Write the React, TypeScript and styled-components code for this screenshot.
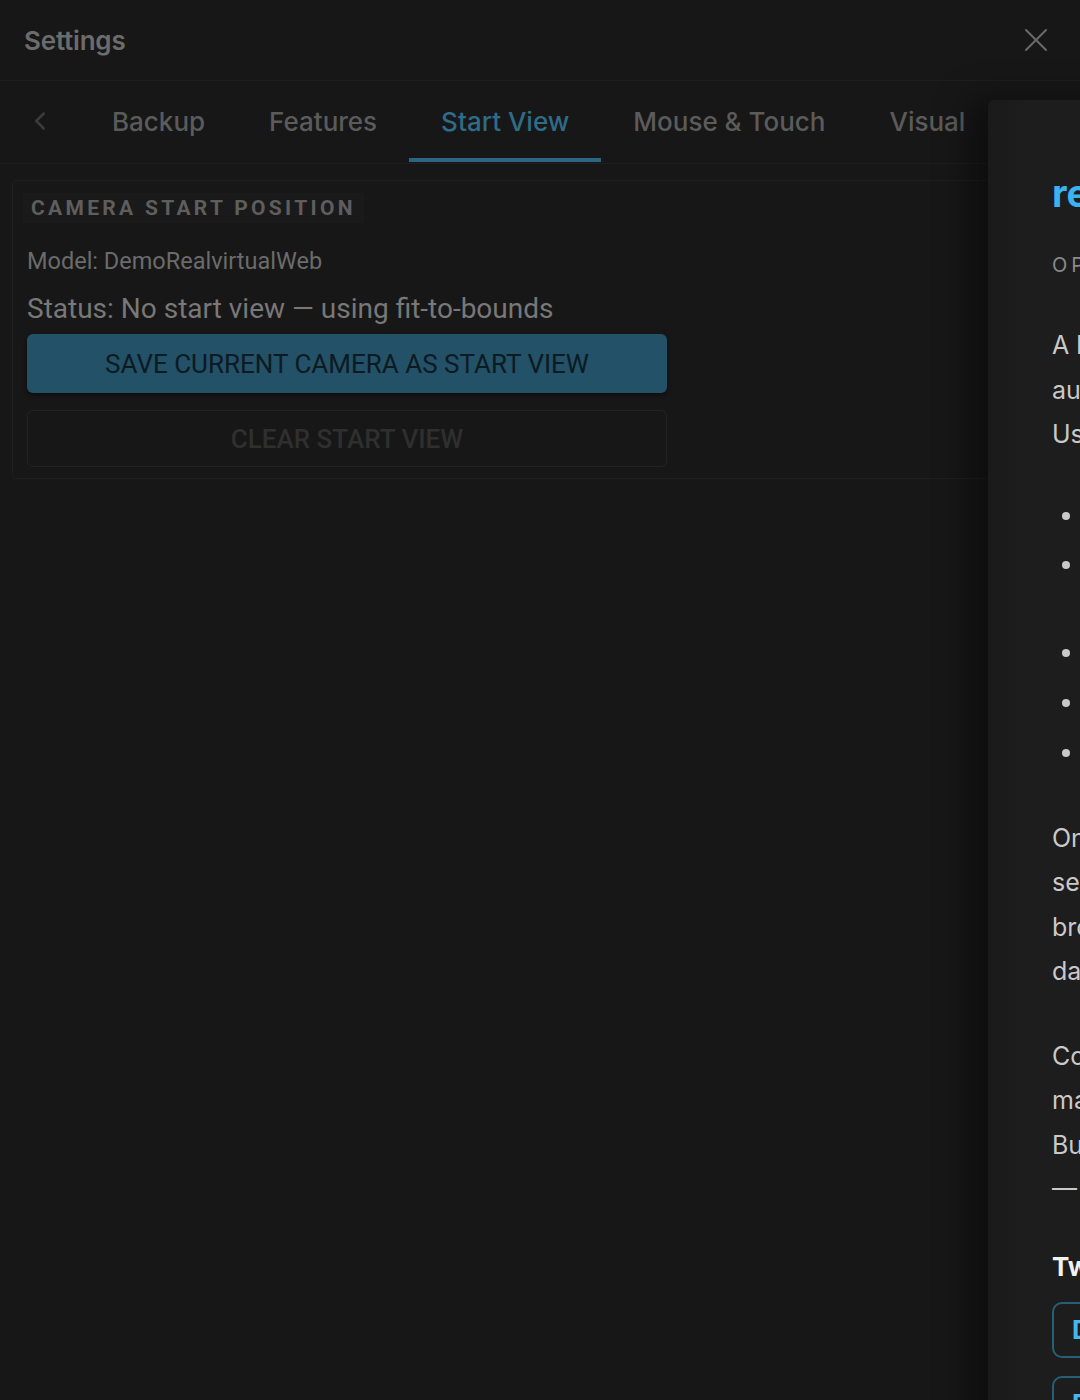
import React, { useState } from 'react';
import styled, { createGlobalStyle } from 'styled-components';
import { X, ChevronLeft } from 'lucide-react';

const GlobalStyle = createGlobalStyle`
  html, body {
    margin: 0;
    padding: 0;
    background: #171717;
  }
  * {
    box-sizing: border-box;
  }
`;

const Page = styled.div`
  position: relative;
  width: 1080px;
  height: 1400px;
  overflow: hidden;
  background: #171717;
  font-family: Inter, 'Noto Sans', sans-serif;
`;

const Header = styled.header`
  height: 81px;
  padding: 0 24px;
  display: flex;
  align-items: center;
  justify-content: space-between;
  border-bottom: 1px solid #1e1e1e;
`;

const Title = styled.h1`
  margin: 0;
  font-size: 26px;
  font-weight: 600;
  color: #6c6c6c;
  letter-spacing: -0.2px;
`;

const IconButton = styled.button`
  background: none;
  border: none;
  padding: 0;
  display: flex;
  align-items: center;
  justify-content: center;
  color: ${({ color }) => color || '#6a6a6a'};
  cursor: pointer;
`;

const TabBar = styled.nav`
  height: 83px;
  display: flex;
  align-items: stretch;
  overflow: hidden;
  border-bottom: 1px solid #1e1e1e;
`;

const BackSlot = styled.div`
  flex: 0 0 80px;
  display: flex;
  align-items: center;
  justify-content: center;
  padding-bottom: 2px;
`;

const Tab = styled.button<{ $active?: boolean }>`
  position: relative;
  flex: 0 0 auto;
  background: none;
  border: none;
  padding: 0 32px 1px;
  font-family: Inter, 'Noto Sans', sans-serif;
  font-size: 26px;
  font-weight: 500;
  white-space: nowrap;
  color: ${({ $active }) => ($active ? '#2e6c88' : '#5b5b5b')};
  cursor: pointer;

  &::after {
    content: '';
    position: absolute;
    left: 0;
    right: 0;
    bottom: 1px;
    height: 4px;
    background: ${({ $active }) => ($active ? '#2b6580' : 'transparent')};
  }
`;

const Content = styled.main`
  padding: 16px 12px;
`;

const Card = styled.section`
  border: 1px solid #1f1f1f;
  border-radius: 4px;
  padding: 12px 14px 11px;
  display: flex;
  flex-direction: column;
`;

const CardHeading = styled.h2`
  align-self: flex-start;
  margin: 0 0 0 -4px;
  padding: 0 8px;
  background: #1a1a1a;
  font-family: Roboto, 'Liberation Sans', sans-serif;
  font-size: 21px;
  line-height: 30px;
  font-weight: 700;
  letter-spacing: 3.3px;
  color: #5e5e5e;
`;

const Meta = styled.p<{ $size: number; $top: number }>`
  margin: ${({ $top }) => $top}px 0 0;
  font-family: Roboto, 'Liberation Sans', sans-serif;
  font-size: ${({ $size }) => $size}px;
  line-height: ${({ $size }) => Math.round($size * 1.25)}px;
  color: ${({ $size }) => ($size > 25 ? '#787878' : '#6b6b6b')};
`;

const ActionButton = styled.button<{ $primary?: boolean; $top: number }>`
  width: 640px;
  height: ${({ $primary }) => ($primary ? 59 : 57)}px;
  margin-top: ${({ $top }) => $top}px;
  border-radius: 6px;
  font-family: Roboto, 'Liberation Sans', sans-serif;
  font-size: 26px;
  font-weight: ${({ $primary }) => ($primary ? 400 : 500)};
  text-transform: uppercase;
  background: ${({ $primary }) => ($primary ? '#235167' : 'transparent')};
  color: ${({ $primary }) => ($primary ? '#0c1a22' : '#2f2f2f')};
  border: ${({ $primary }) => ($primary ? 'none' : '1px solid #222')};
  box-shadow: ${({ $primary }) => ($primary ? '0 2px 4px rgba(0,0,0,0.45)' : 'none')};
  cursor: ${({ $primary }) => ($primary ? 'pointer' : 'default')};
`;

/* side drawer laid over the dialog */
const Drawer = styled.aside`
  position: absolute;
  left: 988px;
  top: 100px;
  width: 720px;
  height: 1400px;
  background: linear-gradient(90deg, #1a1a1a 0px, #1d1d1d 40px, #1e1e1e 100%);
  border-top-left-radius: 6px;
  box-shadow: -18px 0 36px rgba(0, 0, 0, 0.45);
  padding: 71px 0 0 64px;
  font-family: Inter, 'Noto Sans', sans-serif;
  color: #c9c9c9;
  white-space: nowrap;
`;

const DrawerTitle = styled.h2`
  margin: 0;
  font-size: 38px;
  line-height: 44px;
  font-weight: 700;
  color: #3cb3f0;
`;

const Kicker = styled.div`
  margin-top: 36px;
  font-size: 20px;
  line-height: 28px;
  letter-spacing: 4px;
  color: #8a8a8a;
`;

const Para = styled.div<{ $top: number }>`
  margin-top: ${({ $top }) => $top}px;
  font-size: 25px;
  line-height: 44.5px;
`;

const Line = styled.div``;

const List = styled.ul`
  margin: 36px 0 0;
  padding-left: 33px;
  font-size: 25px;
  list-style: disc;

  li::marker {
    color: #c9c9c9;
  }
`;

const Item = styled.li<{ $tight?: boolean }>`
  line-height: ${({ $tight }) => ($tight ? 42.5 : 45)}px;
  margin-bottom: ${({ $tight }) => ($tight ? 2 : 5)}px;
`;

const SubHeading = styled.h3`
  margin: 38px 0 0;
  font-size: 26px;
  line-height: 34px;
  font-weight: 700;
  color: #f2f2f2;
`;

const OutlineButton = styled.button`
  display: block;
  width: 420px;
  height: 56px;
  border: 2px solid #285f75;
  border-radius: 10px;
  background: transparent;
  text-align: left;
  padding: 0 18px;
  font-family: Inter, 'Noto Sans', sans-serif;
  font-size: 26px;
  font-weight: 700;
  color: #45b6f0;
`;

const ButtonStack = styled.div`
  margin-top: 18px;
  display: flex;
  flex-direction: column;
  gap: 18px;
`;

const tabs = ['Backup', 'Features', 'Start View', 'Mouse & Touch', 'Visual'];

export default function App() {
  const [active, setActive] = useState('Start View');

  return (
    <Page>
      <GlobalStyle />
      <Header>
        <Title>Settings</Title>
        <IconButton aria-label="Close">
          <X size={40} strokeWidth={1.2} />
        </IconButton>
      </Header>

      <TabBar>
        <BackSlot>
          <IconButton color="#3b3b3b" aria-label="Previous">
            <ChevronLeft size={30} strokeWidth={2} />
          </IconButton>
        </BackSlot>
        {tabs.map((t) => (
          <Tab key={t} $active={t === active} onClick={() => setActive(t)}>
            {t}
          </Tab>
        ))}
      </TabBar>

      <Content>
        <Card>
          <CardHeading>CAMERA START POSITION</CardHeading>
          <Meta $size={23.5} $top={24}>Model: DemoRealvirtualWeb</Meta>
          <Meta $size={28} $top={15}>Status: No start view — using fit-to-bounds</Meta>
          <ActionButton $primary $top={8}>Save current camera as start view</ActionButton>
          <ActionButton disabled $top={17}>Clear start view</ActionButton>
        </Card>
      </Content>

      <Drawer>
        <DrawerTitle>realvirtual WEB</DrawerTitle>
        <Kicker>OPEN PREVIEW</Kicker>
        <Para $top={44}>
          <Line>A lightweight viewer for digital twins of</Line>
          <Line>automation systems, running in any browser.</Line>
          <Line>Use it to explore models exported from Unity.</Line>
        </Para>
        <List>
          <Item>Orbit, pan and zoom the 3D scene</Item>
          <Item $tight>
            Live signals and drive states
            <br />
            from the simulation
          </Item>
          <Item>Hierarchy and inspector panels</Item>
          <Item>Start views and camera presets</Item>
          <Item>Works on desktop and touch devices</Item>
        </List>
        <Para $top={41}>
          <Line>Once loaded, the model stays cached on this</Line>
          <Line>session, so revisiting it is fast and your</Line>
          <Line>browser keeps the settings you made, with no</Line>
          <Line>data sent to any server.</Line>
        </Para>
        <Para $top={40}>
          <Line>Comments and ideas are welcome — this is</Line>
          <Line>made for the community and keeps improving.</Line>
          <Line>Build something great with it.</Line>
          <Line>— The realvirtual team</Line>
        </Para>
        <SubHeading>Two ways to get started</SubHeading>
        <ButtonStack>
          <OutlineButton>Download Demo</OutlineButton>
          <OutlineButton>Documentation</OutlineButton>
        </ButtonStack>
      </Drawer>
    </Page>
  );
}
